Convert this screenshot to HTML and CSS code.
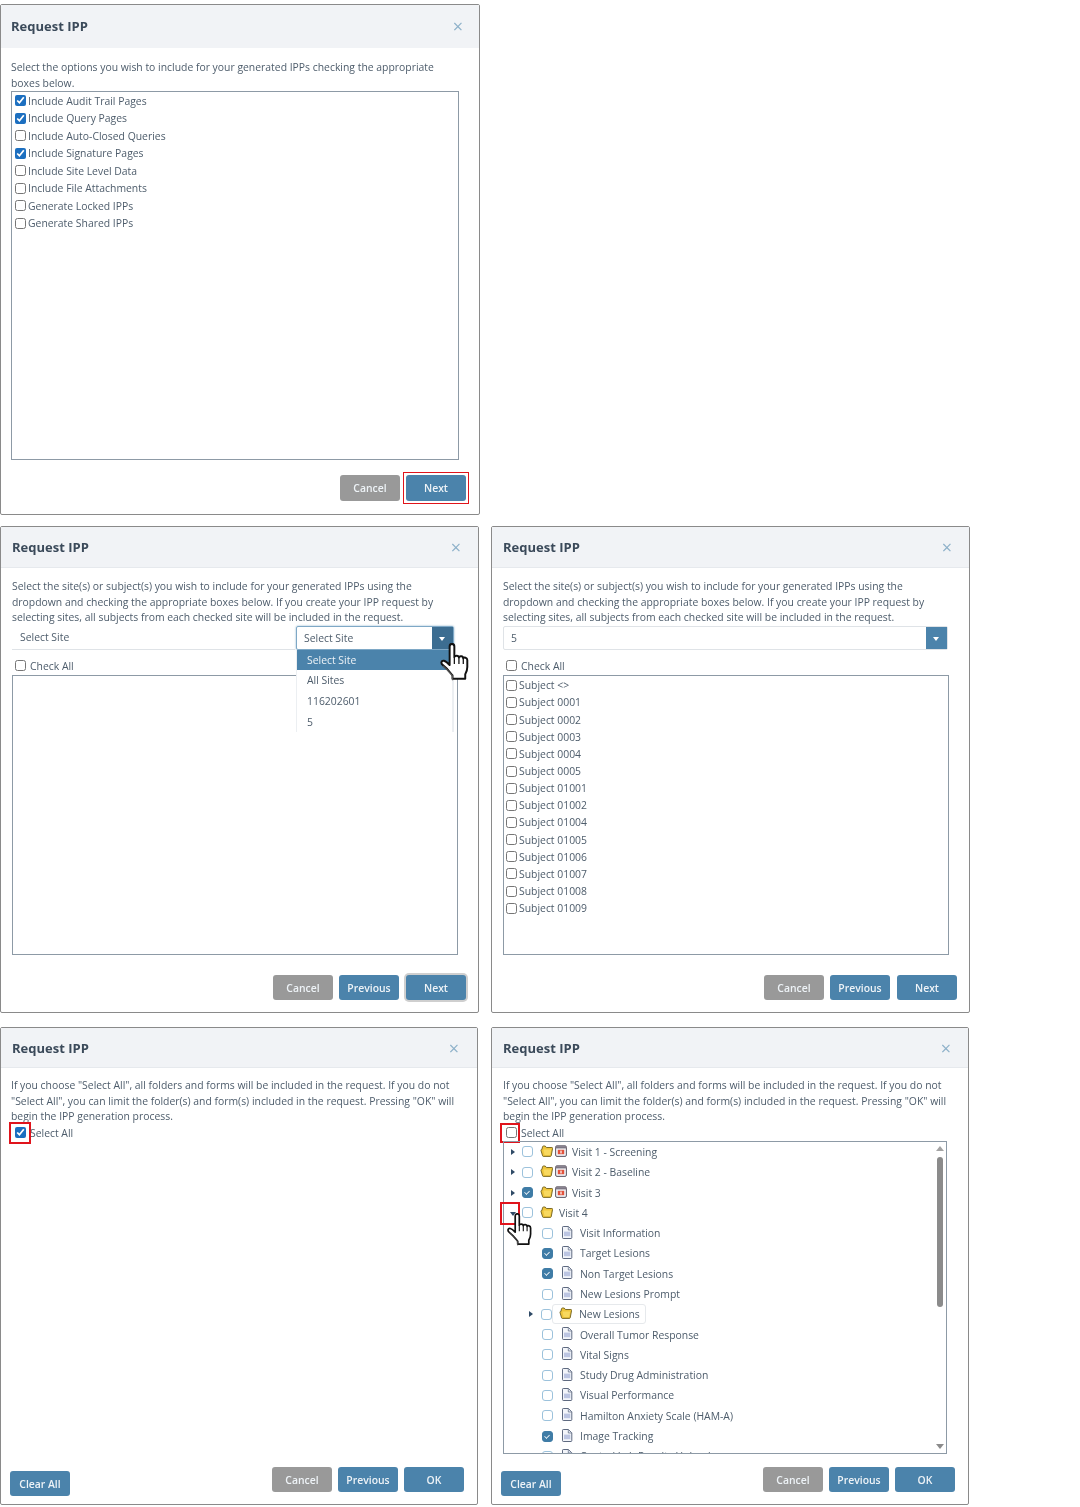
FILE: index.html
```html
<!DOCTYPE html>
<html lang="en">
<head>
    <meta charset="UTF-8">
    <title>Request IPP</title>
    <link rel="stylesheet" href="styles.css">
</head>
<body>
    <svg class="defs" width="0" height="0">
        <symbol id="folder" viewBox="0 0 13 12">
            <path d="M1 5.500 2.600 10.800c.1.400.4.600.8.600h7c.4 0 .7-.3.8-.6L12.600 3.400c.1-.5-.2-.9-.7-.9H6.400L5.200 1H3.400c-.5 0-.8.4-.9.800L2 4.400H1.500c-.4 0-.6.600-.5 1.100Z" fill="#efc53c" stroke="#6e5f1c" stroke-width=".9"/>
            <path d="M3.400 4.400h7.800l-1.200 5.600H4.600Z" fill="#f8d95f"/>
        </symbol>
        <symbol id="calendar" viewBox="0 0 12 12">
            <rect x=".6" y=".8" width="10.800" height="10.600" rx="1.400" fill="#eef0f4" stroke="#5f5864" stroke-width="1"/>
            <rect x="1" y="1.200" width="10" height="2.200" fill="#7d7683"/>
            <rect x="2.800" y="4.800" width="6.400" height="4.400" fill="#e2533c"/>
            <rect x="5.400" y="5.600" width="1.200" height="2.800" fill="#fff"/>
        </symbol>
        <symbol id="doc" viewBox="0 0 12 13">
            <path d="M1.500 1.200c0-.4.300-.7.700-.7H7.500L10.800 3.800v7.900c0 .4-.3.8-.7.800H2.200c-.4 0-.7-.4-.7-.8Z" fill="#f3f5fa" stroke="#5f6a80" stroke-width="1"/>
            <path d="M7.300.8v3.200h3.200" fill="#dfe5f2" stroke="#5f6a80" stroke-width=".7"/>
            <rect x="3" y="5.600" width="6.300" height="4.600" fill="#bcc5e2"/>
        </symbol>
        <symbol id="hand" viewBox="0 0 26 34">
            <path d="M9.200 3c0-1.400.9-2.200 2-2.200s2.100.8 2.100 2.200v9.200c.3-1.500 3.800-1.700 4 .4.400-1.500 3.700-1.400 3.800.8.600-1.100 3.500-.9 3.500 1.500v6.100c0 2.800-.8 4.600-1.800 6.200v3.900H11.700v-2.800C9.600 25.700 7.700 22.700 3.300 19.300 1.100 17.600 2 14.900 4.300 15.500c1.600.4 3.500 2.200 4.900 3.700Z" fill="#fff" stroke="#111" stroke-width="1.700" stroke-linejoin="round"/>
            <path d="M13.300 12.200v6M17.300 12.600v5.600M21.100 13.400v4.800" fill="none" stroke="#111" stroke-width="1.100"/>
            <path d="M3.500 20c4.200 3.300 6 6.400 8.200 8.600v3.800" fill="none" stroke="#555" stroke-width="1"/>
        </symbol>
    </svg>

    <main class="sheet">
        <section class="dialog dialog-options">
            <header class="dialog-head">
                <h2>Request IPP</h2>
                <span class="close">&times;</span>
            </header>
            <div class="dialog-body">
                <p class="intro">Select the options you wish to include for your generated IPPs checking the appropriate boxes below.</p>
                <div class="listbox">
                    <label class="opt"><input type="checkbox" checked>Include Audit Trail Pages</label>
                    <label class="opt"><input type="checkbox" checked>Include Query Pages</label>
                    <label class="opt"><input type="checkbox">Include Auto-Closed Queries</label>
                    <label class="opt"><input type="checkbox" checked>Include Signature Pages</label>
                    <label class="opt"><input type="checkbox">Include Site Level Data</label>
                    <label class="opt"><input type="checkbox">Include File Attachments</label>
                    <label class="opt"><input type="checkbox">Generate Locked IPPs</label>
                    <label class="opt"><input type="checkbox">Generate Shared IPPs</label>
                </div>
            </div>
            <footer class="dialog-foot">
                <button class="btn btn-grey">Cancel</button>
                <button class="btn btn-marked">Next</button>
            </footer>
        </section>

        <div class="blank"></div>

        <section class="dialog dialog-site">
            <header class="dialog-head">
                <h2>Request IPP</h2>
                <span class="close">&times;</span>
            </header>
            <div class="dialog-body">
                <p class="intro">Select the site(s) or subject(s) you wish to include for your generated IPPs using the dropdown and checking the appropriate boxes below. If you create your IPP request by selecting sites, all subjects from each checked site will be included in the request.</p>
                <div class="site-row">
                    <div class="site-text">Select Site</div>
                    <div class="site-select open">
                        <span class="site-value">Select Site</span>
                        <span class="site-arrow"></span>
                        <ul class="site-menu">
                            <li class="current">Select Site</li>
                            <li>All Sites</li>
                            <li>116202601</li>
                            <li>5</li>
                        </ul>
                        <svg class="hand hand-menu"><use href="#hand"/></svg>
                    </div>
                </div>
                <label class="opt check-all"><input type="checkbox">Check All</label>
                <div class="listbox"></div>
            </div>
            <footer class="dialog-foot">
                <button class="btn btn-grey">Cancel</button>
                <button class="btn">Previous</button>
                <button class="btn btn-focus">Next</button>
            </footer>
        </section>

        <section class="dialog dialog-site">
            <header class="dialog-head">
                <h2>Request IPP</h2>
                <span class="close">&times;</span>
            </header>
            <div class="dialog-body">
                <p class="intro">Select the site(s) or subject(s) you wish to include for your generated IPPs using the dropdown and checking the appropriate boxes below. If you create your IPP request by selecting sites, all subjects from each checked site will be included in the request.</p>
                <div class="site-row">
                    <div class="site-select wide">
                        <span class="site-value">5</span>
                        <span class="site-arrow"></span>
                    </div>
                </div>
                <label class="opt check-all"><input type="checkbox">Check All</label>
                <div class="listbox subjects">
                    <label class="opt"><input type="checkbox">Subject &lt;&gt;</label>
                    <label class="opt"><input type="checkbox">Subject 0001</label>
                    <label class="opt"><input type="checkbox">Subject 0002</label>
                    <label class="opt"><input type="checkbox">Subject 0003</label>
                    <label class="opt"><input type="checkbox">Subject 0004</label>
                    <label class="opt"><input type="checkbox">Subject 0005</label>
                    <label class="opt"><input type="checkbox">Subject 01001</label>
                    <label class="opt"><input type="checkbox">Subject 01002</label>
                    <label class="opt"><input type="checkbox">Subject 01004</label>
                    <label class="opt"><input type="checkbox">Subject 01005</label>
                    <label class="opt"><input type="checkbox">Subject 01006</label>
                    <label class="opt"><input type="checkbox">Subject 01007</label>
                    <label class="opt"><input type="checkbox">Subject 01008</label>
                    <label class="opt"><input type="checkbox">Subject 01009</label>
                </div>
            </div>
            <footer class="dialog-foot">
                <button class="btn btn-grey">Cancel</button>
                <button class="btn">Previous</button>
                <button class="btn">Next</button>
            </footer>
        </section>

        <section class="dialog dialog-form form-left">
            <header class="dialog-head">
                <h2>Request IPP</h2>
                <span class="close">&times;</span>
            </header>
            <div class="dialog-body">
                <p class="intro">If you choose "Select All", all folders and forms will be included in the request. If you do not "Select All", you can limit the folder(s) and form(s) included in the request. Pressing "OK" will begin the IPP generation process.</p>
                <label class="opt select-all"><span class="red-box"></span><input type="checkbox" checked>Select All</label>
            </div>
            <footer class="dialog-foot">
                <button class="btn btn-clear">Clear All</button>
                <button class="btn btn-grey">Cancel</button>
                <button class="btn">Previous</button>
                <button class="btn">OK</button>
            </footer>
        </section>

        <section class="dialog dialog-form form-right">
            <header class="dialog-head">
                <h2>Request IPP</h2>
                <span class="close">&times;</span>
            </header>
            <div class="dialog-body">
                <p class="intro">If you choose "Select All", all folders and forms will be included in the request. If you do not "Select All", you can limit the folder(s) and form(s) included in the request. Pressing "OK" will begin the IPP generation process.</p>
                <label class="opt select-all"><span class="red-box"></span><input type="checkbox">Select All</label>
                <div class="tree">
                    <div class="tree-rows">
                        <div class="tree-row"><span class="arrow"></span><span class="tick"></span><svg class="ico folder"><use href="#folder"/></svg><svg class="ico cal"><use href="#calendar"/></svg>Visit 1 - Screening</div>
                        <div class="tree-row"><span class="arrow"></span><span class="tick"></span><svg class="ico folder"><use href="#folder"/></svg><svg class="ico cal"><use href="#calendar"/></svg>Visit 2 - Baseline</div>
                        <div class="tree-row"><span class="arrow"></span><span class="tick on"></span><svg class="ico folder"><use href="#folder"/></svg><svg class="ico cal"><use href="#calendar"/></svg>Visit 3</div>
                        <div class="tree-row visit-open"><span class="arrow down"></span><span class="tick"></span><svg class="ico folder"><use href="#folder"/></svg>Visit 4</div>
                        <div class="tree-row leaf"><span class="tick"></span><svg class="ico doc"><use href="#doc"/></svg>Visit Information</div>
                        <div class="tree-row leaf"><span class="tick on"></span><svg class="ico doc"><use href="#doc"/></svg>Target Lesions</div>
                        <div class="tree-row leaf"><span class="tick on"></span><svg class="ico doc"><use href="#doc"/></svg>Non Target Lesions</div>
                        <div class="tree-row leaf"><span class="tick"></span><svg class="ico doc"><use href="#doc"/></svg>New Lesions Prompt</div>
                        <div class="tree-row sub-folder"><span class="arrow"></span><span class="tick"></span><span class="chip"><svg class="ico folder"><use href="#folder"/></svg>New Lesions</span></div>
                        <div class="tree-row leaf"><span class="tick"></span><svg class="ico doc"><use href="#doc"/></svg>Overall Tumor Response</div>
                        <div class="tree-row leaf"><span class="tick"></span><svg class="ico doc"><use href="#doc"/></svg>Vital Signs</div>
                        <div class="tree-row leaf"><span class="tick"></span><svg class="ico doc"><use href="#doc"/></svg>Study Drug Administration</div>
                        <div class="tree-row leaf"><span class="tick"></span><svg class="ico doc"><use href="#doc"/></svg>Visual Performance</div>
                        <div class="tree-row leaf"><span class="tick"></span><svg class="ico doc"><use href="#doc"/></svg>Hamilton Anxiety Scale (HAM-A)</div>
                        <div class="tree-row leaf"><span class="tick on"></span><svg class="ico doc"><use href="#doc"/></svg>Image Tracking</div>
                        <div class="tree-row leaf"><span class="tick"></span><svg class="ico doc"><use href="#doc"/></svg>Central Lab Results Upload</div>
                    </div>
                    <div class="scrollbar">
                        <span class="scroll-up"></span>
                        <span class="scroll-thumb"></span>
                        <span class="scroll-down"></span>
                    </div>
                    <span class="red-box arrow-mark"></span>
                    <svg class="hand hand-tree"><use href="#hand"/></svg>
                </div>
            </div>
            <footer class="dialog-foot">
                <button class="btn btn-clear">Clear All</button>
                <button class="btn btn-grey">Cancel</button>
                <button class="btn">Previous</button>
                <button class="btn">OK</button>
            </footer>
        </section>
    </main>
</body>
</html>
```
FILE: styles.css
```css
body {
    margin: 0;
    background-color: #fff;
    font-family: "Open Sans", "Noto Sans", sans-serif;
    font-size: 10.4px;
    color: #4d5c6b;
}

.defs {
    position: absolute;
}

.sheet {
    display: grid;
    grid-template-columns: 480px 479px;
    grid-template-rows: 511px 487px 481px;
    column-gap: 11px;
    row-gap: 11px;
    padding-top: 4px;
    filter: blur(0.4px);
}

.dialog {
    display: flex;
    flex-direction: column;
    box-sizing: border-box;
    border: 1px solid #8a8a8a;
    border-radius: 2px;
    background-color: #fff;
    min-width: 0;
}

.dialog-site {
    width: 479px;
}

.dialog-form {
    width: 478px;
    margin-top: 3px;
}

.dialog-head {
    display: flex;
    justify-content: space-between;
    align-items: center;
    height: 40px;
    padding: 0 17px 0 11px;
    background-color: #f1f3f6;
    border-bottom: 1px solid #e6e9ed;
}

.dialog-options .dialog-head {
    height: 41px;
    padding: 0 16px 2px 10px;
    border-bottom: none;
}

.dialog-form .dialog-head {
    height: 39px;
}

.form-left .dialog-head {
    padding-right: 18px;
}

.dialog-head h2 {
    margin: 0;
    font-size: 13px;
    font-weight: 700;
    color: #3b4a5a;
}

.close {
    font-size: 18px;
    line-height: 1;
    color: #8fb2ca;
}

.dialog-body {
    flex: 1;
    display: flex;
    flex-direction: column;
    min-height: 0;
    padding: 11px 20px 0 11px;
}

.dialog-options .dialog-body {
    padding: 12px 20px 0 10px;
}

.dialog-form .dialog-body {
    padding-top: 10px;
}

.form-left .dialog-body {
    padding-left: 10px;
}

.form-right .dialog-body {
    padding-right: 21px;
}

.intro {
    margin: 0;
    line-height: 15.6px;
}

.listbox {
    flex: 1;
    border: 1px solid #8d9aa6;
}

.opt {
    display: flex;
    align-items: center;
    height: 17.5px;
    padding-left: 3px;
}

.opt input {
    width: 11px;
    height: 11px;
    margin: 0 2px 0 0;
    accent-color: #1c6fc0;
}

.subjects {
    padding-top: 1px;
}

.subjects .opt {
    height: 17.15px;
    padding-left: 2px;
}

.dialog-foot {
    display: flex;
    justify-content: flex-end;
    align-items: flex-start;
    gap: 6px;
    padding: 15px 13px 13px 9px;
}

.dialog-site .dialog-foot {
    padding: 20px 12px 12px 9px;
}

.dialog-site .btn:last-child {
    margin-left: 1px;
}

.dialog-form .dialog-foot {
    padding: 13px 13px 8px 9px;
}

.btn {
    width: 60px;
    height: 26px;
    border: none;
    border-radius: 3px;
    background-color: #4b83ab;
    color: #eef3f7;
    font-family: inherit;
    font-size: 10.4px;
    font-weight: 600;
}

.dialog-site .btn,
.dialog-form .btn {
    height: 25px;
}

.btn-grey {
    background-color: #999;
}

.btn-marked {
    position: relative;
}

.btn-marked::after {
    content: "";
    position: absolute;
    top: -3px;
    left: -3px;
    right: -3px;
    bottom: -3px;
    border: 1.500px solid #e0141c;
}

.btn-focus {
    box-shadow: 0 0 0 2px #cfcfcf;
}

.btn-clear {
    margin: 4px auto 0 0;
}

.site-row {
    display: flex;
    gap: 1px;
    height: 24px;
    margin-bottom: 7px;
}

.site-text {
    flex: 1;
    padding: 4px 8px;
    border-bottom: 1px solid #dfe3e7;
    box-sizing: border-box;
}

.site-select {
    position: relative;
    display: flex;
    width: 158px;
    margin-right: 4px;
    box-sizing: border-box;
    border: 1px solid #dfe3e7;
    border-radius: 2px;
}

.site-select.wide {
    flex: 1;
    width: auto;
    margin-right: 1px;
}

.site-select.open {
    border-color: #7ea8c6;
    box-shadow: 0 0 2px #7ea8c6;
}

.site-value {
    flex: 1;
    padding: 4px 7px;
}

.site-arrow {
    position: relative;
    width: 21px;
    background-color: #4b83ab;
}

.open .site-arrow {
    background-color: #3c6d91;
}

.site-arrow::after {
    content: "";
    position: absolute;
    top: 10px;
    left: 7px;
    border: 3.500px solid transparent;
    border-top: 4px solid #fff;
    border-bottom: none;
}

.site-menu {
    position: absolute;
    top: calc(100% + 1px);
    left: -1px;
    right: -1px;
    height: 82px;
    margin: 0;
    padding: 0;
    list-style: none;
    overflow: hidden;
    background-color: #fff;
    border-right: 2px solid #eceff2;
    border-left: 1px solid #eceff2;
    box-sizing: border-box;
}

.site-menu li {
    height: 20.700px;
    line-height: 21px;
    padding-left: 10px;
}

.site-menu .current {
    background-color: #4b83ab;
    color: #eef3f7;
}

.check-all {
    height: 18px;
}

.check-all input,
.select-all input {
    margin-right: 4px;
}

.select-all {
    position: relative;
    padding-left: 4px;
    height: 16px;
}

.form-right .select-all {
    padding-left: 3px;
}

.red-box {
    position: absolute;
    border: 2px solid #e0141c;
    box-sizing: border-box;
}

.select-all .red-box {
    top: -3px;
    left: -2px;
    width: 22px;
    height: 22px;
}

.form-right .select-all .red-box {
    top: -2px;
    left: -3px;
    width: 20px;
    height: 20px;
}

.arrow-mark {
    top: 60px;
    left: -4px;
    width: 20px;
    height: 23px;
}

.hand {
    position: absolute;
    z-index: 2;
}

.hand-menu {
    top: 16px;
    left: 141px;
    width: 32px;
    height: 39px;
}

.hand-tree {
    top: 71px;
    left: 2px;
    width: 26px;
    height: 34px;
}

.tree {
    position: relative;
    flex: 1;
    min-height: 0;
    border: 1px solid #8d9aa6;
}

.tree-rows {
    height: 100%;
    overflow: hidden;
}

.tree-row {
    display: flex;
    align-items: center;
    height: 20.300px;
    padding-left: 6px;
}

.tree-row.leaf {
    padding-left: 38px;
}

.tree-row.sub-folder {
    padding-left: 24px;
}

.arrow {
    position: relative;
    width: 12px;
    height: 0;
}

.arrow::before {
    content: "";
    position: absolute;
    top: -3px;
    left: 1px;
    border: 3px solid transparent;
    border-left: 4px solid #2f4a66;
    border-right: none;
}

.arrow.down::before {
    top: -1px;
    left: 0;
    border: 3px solid transparent;
    border-top: 4px solid #2f4a66;
    border-bottom: none;
}

.sub-folder .arrow {
    width: 13px;
}

.tick {
    position: relative;
    flex: none;
    width: 11px;
    height: 11px;
    border: 1.300px solid #9cc2dc;
    border-radius: 3px;
    box-sizing: border-box;
    margin-right: 7px;
}

.tick.on {
    background-color: #3f7ca6;
    border-color: #3f7ca6;
}

.tick.on::after {
    content: "";
    position: absolute;
    top: 1px;
    left: 2.200px;
    width: 3px;
    height: 5px;
    border: solid #fff;
    border-width: 0 1.300px 1.300px 0;
    transform: rotate(45deg) scale(.8);
}

.ico {
    flex: none;
}

.ico.folder {
    width: 13px;
    height: 12px;
    margin: -2px 2px 0 0;
}

.ico.cal {
    width: 12px;
    height: 12px;
    margin: -2px 5px 0 0;
}

.visit-open .ico.folder {
    margin-right: 6px;
}

.ico.doc {
    width: 12px;
    height: 13px;
    margin: -2px 7px 0 1px;
}

.sub-folder .tick {
    margin-right: 0;
}

.chip {
    display: flex;
    align-items: center;
    width: 94px;
    height: 20px;
    box-sizing: border-box;
    padding-left: 6px;
    border: 1px solid #e6e9ec;
    border-radius: 3px;
}

.chip .ico.folder {
    margin-right: 7px;
}

.scrollbar {
    position: absolute;
    top: 0;
    right: 0;
    bottom: 0;
    width: 17px;
    background-color: #fff;
}

.scroll-thumb {
    position: absolute;
    top: 15px;
    left: 8px;
    width: 6px;
    height: 150px;
    border-radius: 3px;
    background-color: #8b8b8b;
}

.scroll-up,
.scroll-down {
    position: absolute;
    left: 7px;
    border: 4px solid transparent;
}

.scroll-up {
    top: 4px;
    border-bottom: 5px solid #a3a3a3;
    border-top: none;
}

.scroll-down {
    bottom: 4px;
    border-top: 5px solid #8b8b8b;
    border-bottom: none;
}
```
